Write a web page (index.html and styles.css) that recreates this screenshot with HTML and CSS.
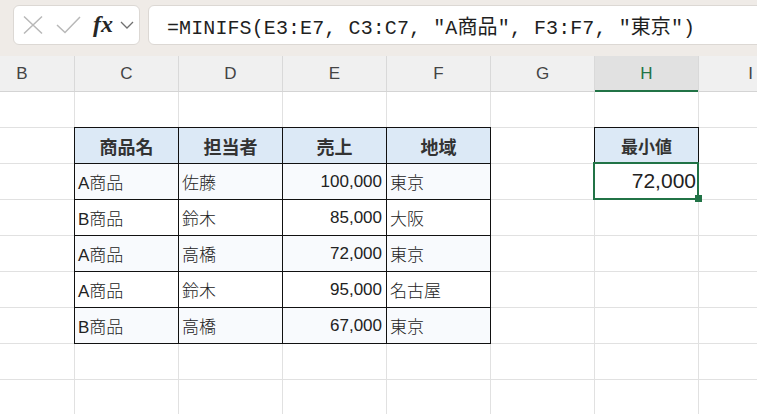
FILE: index.html
```html
<!DOCTYPE html>
<html lang="ja">
<head>
<meta charset="utf-8">
<title>MINIFS</title>
<link rel="stylesheet" href="styles.css">
</head>
<body>
<div class="app">
  <div class="fbar">
    <div class="fbox">
      <svg class="ic-x" width="20" height="20" viewBox="0 0 20 20"><path d="M1 1.5 L19 18.5 M19 1.5 L1 18.5" fill="none" stroke="#b8b8b8" stroke-width="1.5"/></svg>
      <svg class="ic-ok" width="26" height="20" viewBox="0 0 26 20"><path d="M2 10 L10 17.5 L25 2" fill="none" stroke="#b8b8b8" stroke-width="1.5"/></svg>
      <span class="fx">fx</span>
      <svg class="ic-chev" width="14" height="8" viewBox="0 0 14 8"><path d="M1 1 L7 7 L13 1" fill="none" stroke="#707070" stroke-width="1.3"/></svg>
    </div>
    <div class="finput"><span class="formula">=MINIFS(E3:E7, C3:C7, "A商品", F3:F7, "東京")</span></div>
  </div>
  <div class="colhdr">
    <div class="ch first">B</div>
    <div class="ch">C</div>
    <div class="ch">D</div>
    <div class="ch">E</div>
    <div class="ch">F</div>
    <div class="ch">G</div>
    <div class="ch sel">H</div>
    <div class="ch">I</div>
  </div>
  <div class="sheet">
    <div class="tbl">
      <div class="c th">商品名</div><div class="c th">担当者</div><div class="c th">売上</div><div class="c th">地域</div>
      <div class="c odd">A商品</div><div class="c odd">佐藤</div><div class="c odd num">100,000</div><div class="c odd">東京</div>
      <div class="c">B商品</div><div class="c">鈴木</div><div class="c num">85,000</div><div class="c">大阪</div>
      <div class="c odd">A商品</div><div class="c odd">高橋</div><div class="c odd num">72,000</div><div class="c odd">東京</div>
      <div class="c">A商品</div><div class="c">鈴木</div><div class="c num">95,000</div><div class="c">名古屋</div>
      <div class="c odd">B商品</div><div class="c odd">高橋</div><div class="c odd num">67,000</div><div class="c odd">東京</div>
    </div>
    <div class="res">
      <div class="res-h">最小値</div>
      <div class="res-v">72,000<span class="handle"></span></div>
    </div>
  </div>
</div>
</body>
</html>
```
FILE: styles.css
```css
html, body {
  margin: 0;
  padding: 0;
  background: #ffffff;
}

.app {
  width: 757px;
  height: 414px;
  overflow: hidden;
  font-family: "Liberation Sans", "Noto Sans CJK JP", sans-serif;
  color: #222;
}

/* formula bar */
.fbar {
  height: 56px;
  box-sizing: border-box;
  padding: 5px 0 0 13px;
  background: #efebe7;
  display: flex;
  align-items: flex-start;
  gap: 8px;
}

.fbox {
  flex: 0 0 auto;
  width: 127px;
  height: 40px;
  box-sizing: border-box;
  border: 1px solid #dcd8d4;
  border-radius: 6px;
  background: #fff;
  display: flex;
  align-items: center;
  padding-left: 9px;
}

.ic-ok {
  margin-left: 12px;
}

.fx {
  margin-left: 12px;
  font-family: "Liberation Serif", "DejaVu Serif", serif;
  font-style: italic;
  font-size: 24px;
  font-weight: bold;
  color: #262626;
  line-height: 1;
  margin-top: -3px;
}

.ic-chev {
  margin-left: 7px;
}

.finput {
  flex: 1 0 auto;
  height: 40px;
  margin-right: -12px;
  box-sizing: border-box;
  border: 1px solid #dcd8d4;
  border-radius: 6px;
  background: #fff;
  display: flex;
  align-items: center;
  padding-left: 18px;
}

.formula {
  font-family: "Liberation Mono", "Noto Sans CJK JP", monospace;
  font-size: 20px;
  color: #1f1f1f;
  white-space: pre;
  letter-spacing: 0.1px;
}

/* column headers */
.colhdr {
  display: grid;
  grid-template-columns: 75px repeat(7, 104px);
  height: 36px;
  box-sizing: border-box;
  border-bottom: 1px solid #d4d4d4;
  background: #f0f0f0;
}

.ch {
  box-sizing: border-box;
  border-right: 1px solid #d9d9d9;
  display: flex;
  align-items: center;
  justify-content: center;
  font-size: 17px;
  color: #444;
}

.ch.first {
  padding-right: 30px;
}

.ch.sel {
  background: #e1e1e1;
  color: #217346;
  margin-bottom: -1px;
  box-shadow: inset 0 -2px 0 #217346;
}

/* sheet */
.sheet {
  height: 322px;
  display: grid;
  grid-template-columns: 75px repeat(7, 104px);
  grid-template-rows: repeat(9, 36px);
  background-image:
    linear-gradient(to right, #e1e1e1 1px, transparent 1px),
    linear-gradient(to bottom, #e1e1e1 1px, transparent 1px);
  background-size: 104px 100%, 100% 36px;
  background-position: 74px 0, 0 35px;
}

.tbl {
  grid-column: 2 / 6;
  grid-row: 2 / 8;
  margin: -1px 0 0 -1px;
  display: grid;
  grid-template-columns: repeat(4, 104px);
  grid-template-rows: repeat(6, 36px);
  border-top: 1px solid #111;
  border-left: 1px solid #111;
}

.c {
  box-sizing: border-box;
  border-right: 1px solid #111;
  border-bottom: 1px solid #111;
  display: flex;
  align-items: center;
  padding: 0 3px;
  font-size: 17px;
  font-weight: 300;
  color: #222;
  background: #fff;
  white-space: nowrap;
}

.c.odd {
  background: #f8fafd;
}

.c.th {
  background: #dce9f6;
  justify-content: center;
  font-weight: bold;
  font-size: 18px;
  color: #333;
}

.c.num {
  justify-content: flex-end;
  padding-right: 4px;
}

.res {
  grid-column: 7;
  grid-row: 2 / 4;
  margin: -1px 0 0 -1px;
  display: flex;
  flex-direction: column;
}

.res-h {
  height: 37px;
  box-sizing: border-box;
  border: 1px solid #111;
  background: #dce9f6;
  display: flex;
  align-items: center;
  justify-content: center;
  font-size: 17px;
  font-weight: bold;
  color: #333;
}

.res-v {
  position: relative;
  width: 106px;
  height: 39px;
  margin: -2px 0 0 -1px;
  box-sizing: border-box;
  border: 2px solid #217346;
  background: #fff;
  display: flex;
  align-items: center;
  justify-content: flex-end;
  padding-right: 1px;
  font-size: 21px;
  color: #222;
}

.handle {
  position: absolute;
  right: -5px;
  bottom: -4px;
  width: 7px;
  height: 7px;
  background: #217346;
}
```
